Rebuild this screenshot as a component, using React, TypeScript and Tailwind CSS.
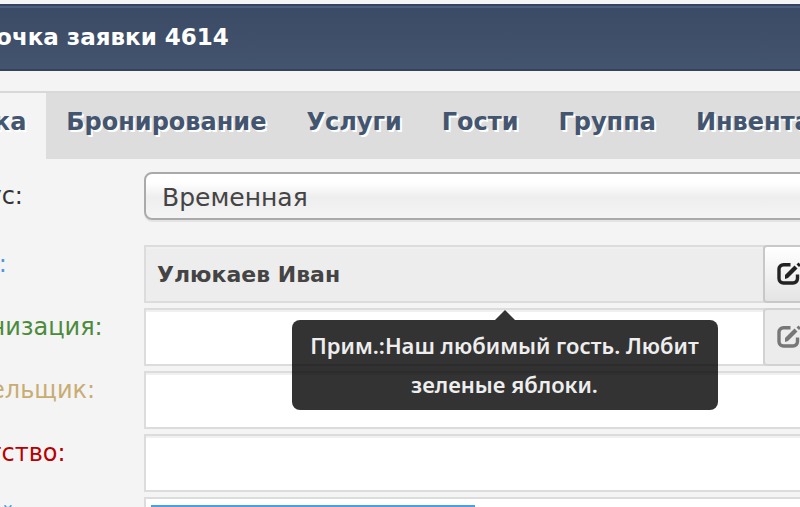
import React, { useState } from 'react'

const tabs = ['Заявка', 'Бронирование', 'Услуги', 'Гости', 'Группа', 'Инвентарь']

const EditIcon = () => (
  <svg className="h-6 w-6 shrink-0" viewBox="0 0 24 24" fill="none" stroke="currentColor" strokeWidth="3.4">
    <path d="M13.500 2.700H6.500a4.500 4.500 0 0 0-4.500 4.500v9.300a4.500 4.500 0 0 0 4.500 4.500h9.500a4.500 4.500 0 0 0 4.500-4.500v-4" />
    <path d="M8 17v-4l9.500-9.500 3 3-9.500 9.500z" fill="currentColor" stroke="none" />
    <path d="M19.500 2.500l2-2 2.500 2.500-2 2z" fill="currentColor" stroke="none" />
  </svg>
)

const ClearIcon = () => (
  <svg className="h-6 w-6 shrink-0" viewBox="0 0 24 24" fill="none" stroke="currentColor" strokeWidth="3">
    <path d="M5 5l14 14M19 5L5 19" />
  </svg>
)

const buttonClass =
  'flex flex-1 items-center justify-center border-2 border-[#c8c8c8] bg-linear-to-b from-white to-[#e4e4e4] text-[#222] first:rounded-l disabled:border-[#d2d2d2] disabled:from-[#ececec] disabled:to-[#ececec] disabled:text-[#777]'

type FieldProps = {
  id: string
  label: string
  color: string
  defaultValue?: string
  readOnly?: boolean
  actions?: 'enabled' | 'disabled'
  note?: string
}

const Field = ({ id, label, color, defaultValue, readOnly, actions, note }: FieldProps) => (
  <div className="flex">
    <label htmlFor={id} className={`w-[216px] shrink-0 pt-[3px] text-[24px] leading-8 ${color}`}>
      {label}
    </label>
    <div className="relative flex h-[58px] flex-1">
      <input
        id={id}
        type="text"
        defaultValue={defaultValue}
        readOnly={readOnly}
        className="min-w-0 flex-1 border-2 border-[#dcdcdc] bg-white px-[11px] text-[22px] font-bold text-[#444] shadow-[inset_0_2px_0_#f0f0f0] outline-none read-only:bg-[#ededed]"
      />
      {actions && (
        <div className="-ml-0.5 flex w-[102px]">
          <button type="button" aria-label="Изменить" disabled={actions === 'disabled'} className={buttonClass}>
            <EditIcon />
          </button>
          <button type="button" aria-label="Очистить" disabled={actions === 'disabled'} className={buttonClass}>
            <ClearIcon />
          </button>
        </div>
      )}
      {note && (
        <div
          role="tooltip"
          className="absolute top-[75px] left-1/2 z-10 w-[426px] -translate-x-1/2 rounded-lg bg-black/80 px-3 py-1.5 text-center font-['Noto_Sans',sans-serif] text-[22px] leading-[39px] font-semibold text-[#eee]"
        >
          <span className="absolute bottom-full left-1/2 -translate-x-1/2 border-x-10 border-b-10 border-x-transparent border-b-black/80" />
          {note}
        </div>
      )}
    </div>
  </div>
)

const App = () => {
  const [activeTab, setActiveTab] = useState('Заявка')

  return (
    <div className="h-screen overflow-hidden bg-[#f4f4f4] pt-1 font-['DejaVu_Sans',sans-serif]">
      <header className="-ml-[68px] border-y-2 border-[#35435c] bg-linear-to-b from-[#3b4a65] to-[#43546f] shadow-[inset_0_2px_0_#4a5f80]">
        <h1 className="text-[23px] leading-[63px] font-bold whitespace-nowrap text-white">Карточка заявки 4614</h1>
      </header>

      {/* Tabs */}
      <nav className="mt-5 -ml-[90px] flex h-[68px] border-t-2 border-[#d8d8d8] bg-[#ddd]">
        {tabs.map((tab) => (
          <button
            key={tab}
            type="button"
            onClick={() => setActiveTab(tab)}
            className={`shrink-0 px-5 pb-2 text-[24px] font-bold text-[#445570] text-shadow-[2px_2px_0_#fff] ${
              activeTab === tab ? 'bg-[#f4f4f4]' : ''
            }`}
          >
            {tab}
          </button>
        ))}
      </nav>

      {/* Request form */}
      <form className="-mr-[65px] -ml-[72px] flex flex-col gap-[5px] pt-[13px]">
        <div className="mb-5 flex">
          <label htmlFor="status" className="w-[216px] shrink-0 pt-2 text-[24px] leading-8 text-[#333]">
            Статус:
          </label>
          <select
            id="status"
            className="h-12 flex-1 appearance-none rounded-lg border-2 border-[#aaa] bg-linear-to-b from-white from-20% via-[#eee] via-52% to-[#f4f4f4] px-4 pt-1 text-[25px] text-[#444] shadow-[0_2px_0_#e4e4e4]"
          >
            <option>Временная</option>
          </select>
        </div>
        <Field
          id="guest"
          label="Гость:"
          color="text-[#4a9ae0]"
          defaultValue="Улюкаев Иван"
          readOnly
          actions="enabled"
          note="Прим.:Наш любимый гость. Любит зеленые яблоки."
        />
        <Field id="organization" label="Организация:" color="text-[#4b8b3b]" actions="disabled" />
        <Field id="payer" label="Плательщик:" color="text-[#c8ad72]" />
        <Field id="agency" label="Агентство:" color="text-[#b80000]" />
        <div className="flex">
          <label htmlFor="tag" className="w-[216px] shrink-0 pt-[3px] text-[24px] leading-8 text-[#4a9ae0]">
            Общий:
          </label>
          <div className="h-[58px] flex-1 border-2 border-[#dcdcdc] bg-white px-[5px] py-1.5">
            <button id="tag" type="button" aria-label="Метка" className="block h-10 w-[324px] bg-[#4d9de6]" />
          </div>
        </div>
      </form>
    </div>
  )
}

export default App
